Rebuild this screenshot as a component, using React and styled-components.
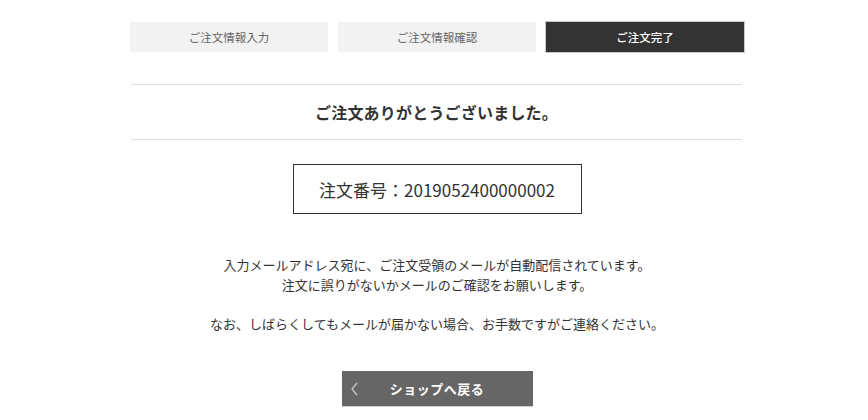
import React from "react";
import styled, { createGlobalStyle } from "styled-components";

const steps = [
    { id: "input", label: "ご注文情報入力" },
    { id: "confirm", label: "ご注文情報確認" },
    { id: "done", label: "ご注文完了", active: true },
];

const Global = createGlobalStyle`
    body {
        margin: 0;
        background: #fff;
        font-family: "Noto Sans CJK JP", "Noto Sans", sans-serif;
        color: #333;
    }
`

const Page = styled.div`
    width: 614px;
    margin-left: 130px;
    padding-top: 22px;
`

const Steps = styled.ul`
    display: grid;
    grid-template-columns: repeat(3, 1fr);
    gap: 10px;
    list-style: none;
    margin: 0;
    padding: 0;
`

const Step = styled.li`
    height: 30px;
    display: flex;
    align-items: center;
    justify-content: center;
    font-size: 11.5px;
    font-weight: ${p => (p.$active ? 500 : 400)};
    background: ${p => (p.$active ? "#333" : "#f2f2f2")};
    color: ${p => (p.$active ? "#fff" : "#666")};
    box-shadow: ${p => (p.$active ? "0 0 0 1px #c8c8c8" : "none")};
`

const Heading = styled.h1`
    margin: 32px 2px 0 1px;
    height: 54px;
    display: flex;
    align-items: center;
    justify-content: center;
    border-top: 1px solid #dedede;
    border-bottom: 1px solid #dedede;
    font-size: 16px;
    font-weight: 700;
    letter-spacing: 0.2px;
    color: #333;
`

const OrderNo = styled.div`
    width: 287px;
    height: 48px;
    margin: 24px auto 0;
    border: 1px solid #333;
    display: flex;
    align-items: center;
    justify-content: center;
    font-size: 17px;
    color: #333;
`

const Message = styled.div`
    margin-top: 41px;
    text-align: center;
    font-size: 13px;
    line-height: 19.5px;
    color: #333;

    p {
        margin: 0;
    }
`

const Spacer = styled.div`
    height: 19.5px;
`

const BackButton = styled.a`
    position: relative;
    display: flex;
    align-items: center;
    justify-content: center;
    width: 191px;
    height: 35px;
    margin: 38px auto 0;
    background: #666;
    border-bottom: 1px solid #d0d0d0;
    color: #fff;
    font-size: 13px;
    font-weight: 700;
    text-decoration: none;
    letter-spacing: 0.5px;
`

const Chevron = styled.svg`
    position: absolute;
    left: 8px;
    top: 50%;
    transform: translateY(-50%);
`

const App = () => {
    return (
        <>
            <Global />
            <Page>
                <Steps>
                    {steps.map(step => (
                        <Step key={step.id} $active={step.active}>{step.label}</Step>
                    ))}
                </Steps>
                <Heading>ご注文ありがとうございました。</Heading>
                <OrderNo>注文番号：2019052400000002</OrderNo>
                <Message>
                    <p>入力メールアドレス宛に、ご注文受領のメールが自動配信されています。</p>
                    <p>注文に誤りがないかメールのご確認をお願いします。</p>
                    <Spacer />
                    <p>なお、しばらくしてもメールが届かない場合、お手数ですがご連絡ください。</p>
                </Message>
                <BackButton href="#">
                    <Chevron width="10" height="16" viewBox="0 0 10 16">
                        <path d="M7 2 L2 8 L7 14" fill="none" stroke="#ccc" strokeWidth="1.2" />
                    </Chevron>
                    ショップへ戻る
                </BackButton>
            </Page>
        </>
    )
}

export default App
